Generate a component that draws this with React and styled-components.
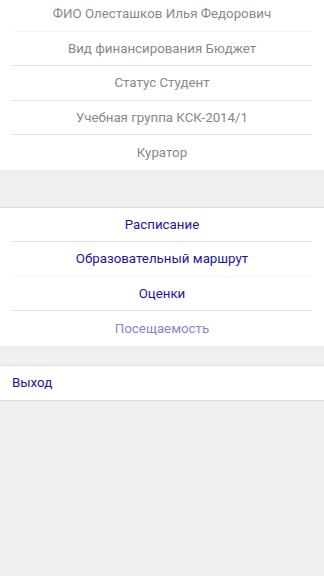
import React from 'react'
import styled, {createGlobalStyle} from 'styled-components'

const Global = createGlobalStyle`
  html, body {
    margin: 0;
    padding: 0;
    background: #efefef;
    font-family: Roboto, "Noto Sans", sans-serif;
    -webkit-font-smoothing: antialiased;
  }
`

const info = [
  'ФИО Олесташков Илья Федорович',
  'Вид финансирования Бюджет',
  'Статус Студент',
  'Учебная группа КСК-2014/1',
  'Куратор',
]

const links = [
  {id: 1, title: 'Расписание'},
  {id: 2, title: 'Образовательный маршрут'},
  {id: 3, title: 'Оценки'},
  {id: 4, title: 'Посещаемость', active: true},
]

export default function App() {
  return (
    <Page>
      <Global />
      <Section>
        {info.map((item, i) => (
          <Row key={item} faint={i === 0} last={i === info.length - 1}>
            <InfoText>{item}</InfoText>
          </Row>
        ))}
      </Section>
      <Section bordered gap={37}>
        {links.map((l, i) => (
          <Row key={l.id} faint={i === 1} last={i === links.length - 1}>
            <LinkText active={l.active}>{l.title}</LinkText>
          </Row>
        ))}
      </Section>
      <Section bordered gap={19} bottom>
        <ExitRow>Выход</ExitRow>
      </Section>
    </Page>
  )
}

const Page = styled.div`
  margin-top: -3px;
  min-height: 579px;
  background: #efefef;
`

const Section = styled.section`
  background: #fff;
  margin-top: ${p => p.gap ? p.gap + 'px' : '0'};
  border-top: ${p => p.bordered ? '1px solid #dcdcdc' : 'none'};
  border-bottom: ${p => p.bottom ? '1px solid #dcdcdc' : 'none'};
`

const Row = styled.div`
  height: 34.5px;
  margin: 0 12px;
  display: flex;
  align-items: center;
  justify-content: center;
  box-sizing: border-box;
  border-bottom: ${p => p.last ? 'none' : `1px solid ${p.faint ? '#f4f4f4' : '#e2e2e2'}`};
`

const InfoText = styled.span`
  font-size: 13.3px;
  color: #888;
`

const LinkText = styled.span`
  font-size: 13.3px;
  color: ${p => p.active ? '#8a85c9' : '#22159a'};
`

const ExitRow = styled.div`
  height: 34px;
  padding: 0 12px;
  display: flex;
  align-items: center;
  font-size: 13.3px;
  color: #22159a;
`
